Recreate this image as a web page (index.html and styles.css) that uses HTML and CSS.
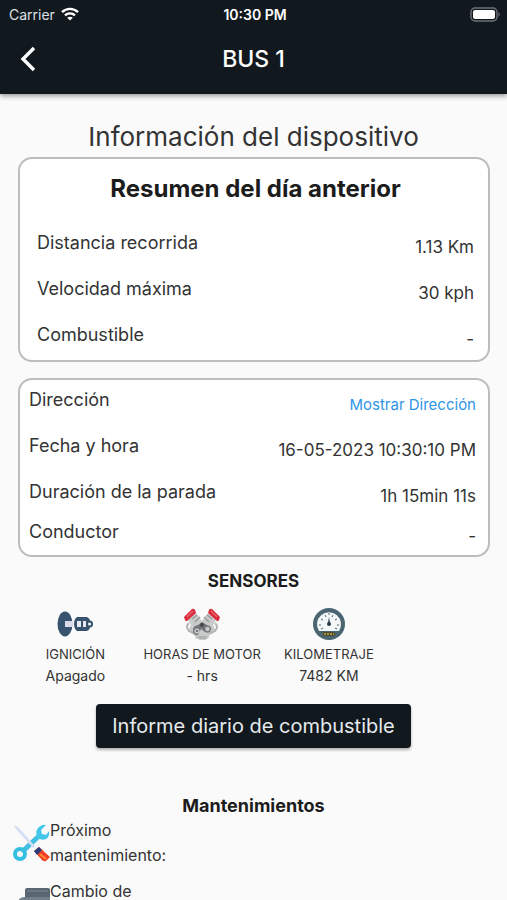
FILE: index.html
```html
<!DOCTYPE html>
<html lang="es">

<head>
    <meta charset="UTF-8">
    <meta name="viewport" content="width=device-width, initial-scale=1.0">
    <title>BUS 1</title>
    <link rel="stylesheet" href="styles.css">
</head>

<body>
    <header class="app-bar">
        <div class="status">
            <div class="carrier">
                <span>Carrier</span>
                <svg width="18" height="14" viewBox="0 0 18 14" fill="none" stroke="#fff" stroke-width="2.4">
                    <path d="M1 5.2C5.5 0.8 12.5 0.8 17 5.2"/>
                    <path d="M4 8.4C6.8 5.7 11.2 5.7 14 8.4"/>
                    <path d="M9 13.6L6.2 10.7C7.8 9.3 10.2 9.3 11.8 10.7Z" fill="#fff" stroke="none"/>
                </svg>
            </div>
            <span class="time">10:30 PM</span>
            <svg class="battery" width="31" height="15" viewBox="0 0 31 15">
                <rect x="1" y="1" width="26" height="13" rx="4" fill="none" stroke="#6d7176" stroke-width="1.4"/>
                <rect x="3" y="3" width="22" height="9" rx="2" fill="#fff"/>
                <path d="M28.5 5Q31 7.5 28.5 10Z" fill="#6d7176"/>
            </svg>
        </div>
        <div class="nav">
            <button class="back" type="button" aria-label="Atrás">
                <svg width="16" height="26" viewBox="0 0 16 26" fill="none" stroke="#fff" stroke-width="3.4">
                    <path d="M14 2L3 13L14 24"/>
                </svg>
            </button>
            <h1>BUS 1</h1>
        </div>
    </header>

    <main>
        <h2 class="page-title">Información del dispositivo</h2>

        <section class="card summary">
            <h3>Resumen del día anterior</h3>
            <dl>
                <div class="row"><dt>Distancia recorrida</dt><dd>1.13 Km</dd></div>
                <div class="row"><dt>Velocidad máxima</dt><dd>30 kph</dd></div>
                <div class="row"><dt>Combustible</dt><dd>-</dd></div>
            </dl>
        </section>

        <section class="card details">
            <dl>
                <div class="row"><dt>Dirección</dt><dd><a href="#">Mostrar Dirección</a></dd></div>
                <div class="row"><dt>Fecha y hora</dt><dd>16-05-2023 10:30:10 PM</dd></div>
                <div class="row compact"><dt>Duración de la parada</dt><dd>1h 15min 11s</dd></div>
                <div class="row"><dt>Conductor</dt><dd>-</dd></div>
            </dl>
        </section>

        <h3 class="section-title">SENSORES</h3>
        <div class="sensors">
            <div class="sensor">
                <svg width="36" height="32" viewBox="0 0 36 32">
                    <ellipse cx="8" cy="16" rx="7.5" ry="12.5" fill="#38536d"/>
                    <path d="M8 13h8v6H8z" fill="#dcd9ec"/>
                    <path d="M20 9h9q3 0 4 3.5q3 0 3 3.5t-3 3.5q-1 3.5-4 3.5h-9q-3-2-3-7t3-7z" fill="#38536d"/>
                    <path d="M20 13h4v6h-4zM26 13h3v6h-3z" fill="#e9e8f3"/>
                    <circle cx="32.5" cy="16" r="1.5" fill="#fafafa"/>
                </svg>
                <span class="name">IGNICIÓN</span>
                <span>Apagado</span>
            </div>
            <div class="sensor">
                <svg width="38" height="32" viewBox="0 0 38 32">
                    <path d="M5 12l8-7 6 8 6-8 8 7-3 5 3 6-6 3-2 5H13l-2-5-6-3 3-6z" fill="#c9caca"/>
                    <path d="M9 11l5-4M12 14l5-5M29 11l-5-4M26 14l-5-5" stroke="#999b9c" stroke-width="1.5"/>
                    <path d="M1 9L9 1q2-1 3 1l1 3-9 8q-1 1-2-1zM37 9L29 1q-2-1-3 1l-1 3 9 8q1 1 2-1z" fill="#d92b3b"/>
                    <path d="M4 9l6-6M34 9l-6-6" stroke="#ef6670" stroke-width="1.2"/>
                    <path d="M6 15q-4 4 0 8l6 3M32 15q4 4 0 8l-6 3" fill="none" stroke="#b3b5b7" stroke-width="2"/>
                    <path d="M10 22q0-4 5-5l4-3 5 3q5 1 4 5t-6 2l-4-3-3 6q-5 1-5-5z" fill="#727578"/>
                    <circle cx="14" cy="23" r="2.6" fill="#c9caca"/>
                    <circle cx="19" cy="17" r="2" fill="#44484b"/>
                    <circle cx="24.5" cy="21" r="2.2" fill="#c9caca"/>
                    <circle cx="14" cy="23" r="1" fill="#55585b"/>
                    <path d="M15 29h9M16 31h7" stroke="#999b9c"/>
                </svg>
                <span class="name">HORAS DE MOTOR</span>
                <span>- hrs</span>
            </div>
            <div class="sensor">
                <svg width="32" height="32" viewBox="0 0 32 32">
                    <circle cx="16" cy="16" r="16" fill="#4b6672"/>
                    <path d="M6 23a12 12 0 1 1 20 0z" fill="#f4f7f8"/>
                    <path d="M6 17h2M8 11l2 1M12 7l1 2M16 5v2M20 7l-1 2M24 11l-2 1M26 17h-2M8 21l2-1M24 21l-2-1" stroke="#4b6672"/>
                    <path d="M16 9l1 6h-2z" fill="#263945"/>
                    <circle cx="16" cy="16" r="2" fill="#263945"/>
                    <path d="M10 24h12v4H10z" fill="#4b4e3d"/>
                    <path d="M11 26h2M14 26h2M17 26h2M20 26h1" stroke="#b49432" stroke-width="2"/>
                </svg>
                <span class="name">KILOMETRAJE</span>
                <span>7482 KM</span>
            </div>
        </div>

        <button class="report" type="button">Informe diario de combustible</button>

        <h3 class="section-title large">Mantenimientos</h3>
        <ul class="maintenance">
            <li>
                <svg width="38" height="38" viewBox="0 0 38 38">
                    <path d="M10 28L28 11" stroke="#42bfe2" stroke-width="5"/>
                    <path d="M26 14q-4-6 1-11 4-3 7-2l-5 5 1 4 4 1 3-4q1 6-3 8-4 2-8-1z" fill="#43c7e9"/>
                    <circle cx="8" cy="30" r="5" fill="none" stroke="#35bfe0" stroke-width="4"/>
                    <path d="M2 1l4 2 17 19-2 2L4 5z" fill="#d4def4"/>
                    <path d="M22 27l5-4 11 10-4 4q-2 1-4-1z" fill="#ef4025"/>
                    <path d="M22 27l5-4 3 3-5 5z" fill="#293b78"/>
                    <path d="M28 30l6 5" stroke="#ff8b2c" stroke-width="2"/>
                </svg>
                <span>Próximo mantenimiento:</span>
            </li>
            <li>
                <svg width="38" height="38" viewBox="0 0 38 38">
                    <path d="M15 3h21q2 0 2 2v9H13V5q0-2 2-2z" fill="#596570"/>
                    <path d="M6 16q2-4 7-4h25v18H6z" fill="#72808b"/>
                    <path d="M15 6h21" stroke="#7f8a93"/>
                </svg>
                <span>Cambio de</span>
            </li>
        </ul>
    </main>
</body>

</html>
```
FILE: styles.css
```css
* {
    box-sizing: border-box;
}

body {
    display: flex;
    flex-direction: column;
    height: 100vh;
    margin: 0;
    background-color: #fafafa;
    color: #333;
    font-family: Inter, "Open Sans", sans-serif;
    font-size: 16px;
}

h1, h2, h3, dl, dd, ul {
    margin: 0;
    padding: 0;
}

svg {
    display: block;
    flex-shrink: 0;
}

button {
    border: none;
    cursor: pointer;
    font-family: inherit;
}

.app-bar {
    flex-shrink: 0;
    background-color: #11191f;
    color: #fff;
    box-shadow: 0 2px 5px rgba(0, 0, 0, 0.4);
}

.status {
    display: grid;
    grid-template-columns: 1fr auto 1fr;
    align-items: center;
    height: 28px;
    padding: 0 6px 0 9px;
    font-size: 14px;
}

.carrier {
    display: flex;
    align-items: center;
    gap: 6px;
    color: #dde0e2;
}

.time {
    font-weight: 600;
}

.battery {
    justify-self: end;
}

.nav {
    display: grid;
    grid-template-columns: 56px 1fr 56px;
    align-items: center;
    height: 66px;
    padding-bottom: 4px;
}

.back {
    display: flex;
    justify-content: center;
    padding: 8px;
    background: none;
}

.nav h1 {
    font-size: 23px;
    font-weight: 500;
    text-align: center;
}

main {
    flex: 1;
    min-height: 0;
    padding-top: 27px;
    overflow-x: hidden;
    overflow-y: auto;
    scrollbar-width: none;
}

.page-title {
    font-size: 26px;
    font-weight: 400;
    line-height: 32px;
    margin-bottom: 4px;
    text-align: center;
}

.card {
    margin: 0 17px 16px 18px;
    border: 2px solid #bdbdbd;
    border-radius: 14px;
    background-color: #fff;
}

.summary {
    padding: 14px 14px 9px 17px;
}

.summary h3 {
    margin-bottom: 26px;
    color: #1c1c1c;
    font-size: 24px;
    font-weight: 700;
    line-height: 32px;
    text-align: center;
}

.details {
    margin-bottom: 12px;
    padding: 8px 12px 7px 9px;
}

.row {
    display: flex;
    justify-content: space-between;
    height: 46px;
    line-height: 24px;
}

.row.compact {
    height: 40px;
}

.row:last-child {
    height: 28px;
}

.row dt {
    font-size: 18px;
}

.row dd {
    padding-top: 4px;
    font-size: 17px;
}

.row a {
    color: #2f95e8;
    font-size: 15px;
    text-decoration: none;
}

.section-title {
    color: #1c1c1c;
    font-size: 17px;
    font-weight: 700;
    line-height: 24px;
    text-align: center;
}

.section-title.large {
    font-size: 18px;
}

.sensors {
    display: flex;
    margin: 15px -12px 17px 12px;
}

.sensor {
    display: flex;
    flex-direction: column;
    align-items: center;
    width: 25%;
    font-size: 14px;
    line-height: 22px;
    white-space: nowrap;
}

.sensor svg {
    margin-bottom: 3px;
}

.sensor .name {
    font-size: 13px;
}

.report {
    display: block;
    margin: 0 auto 46px;
    padding: 8px 16px;
    border-radius: 4px;
    background-color: #11191f;
    color: #e6eaed;
    font-size: 20px;
    line-height: 28px;
    box-shadow: 0 2px 3px rgba(0, 0, 0, 0.3);
}

.maintenance {
    list-style: none;
}

.maintenance li {
    display: flex;
    align-items: center;
    width: 184px;
    min-height: 50px;
    margin: 0 0 11px 12px;
    font-size: 16px;
    line-height: 25px;
}

.maintenance span {
    align-self: flex-start;
}
```
